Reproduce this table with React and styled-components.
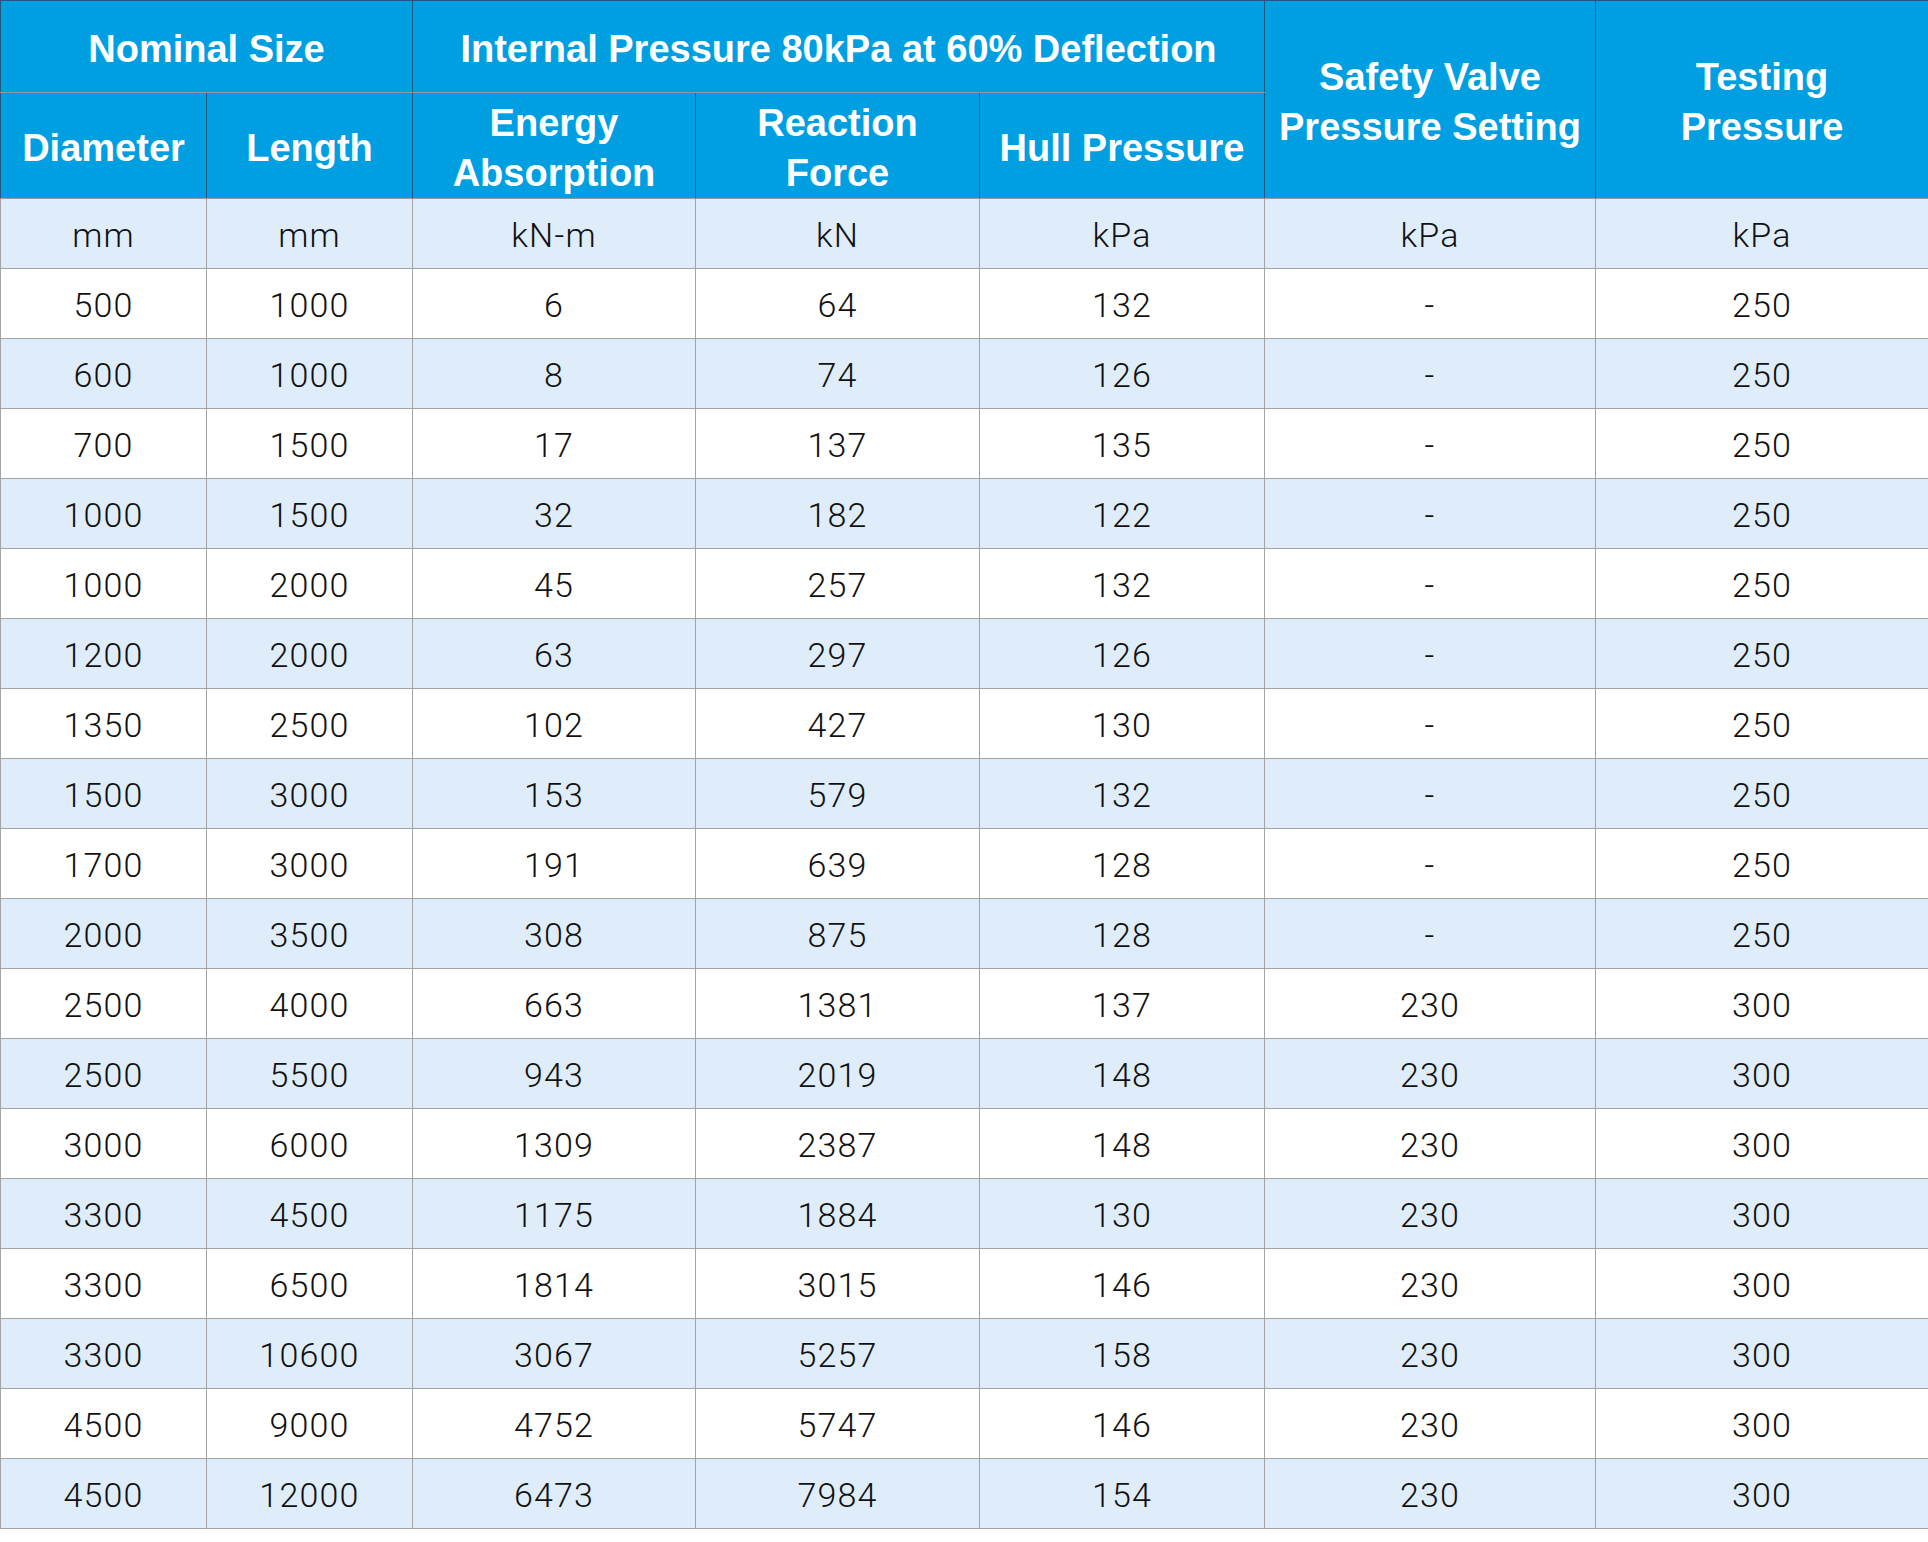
import React from 'react';
import styled, { createGlobalStyle } from 'styled-components';

const GlobalStyle = createGlobalStyle`
  html, body {
    margin: 0;
    padding: 0;
    background: #ffffff;
  }
`;

const columns = [206, 206, 283, 284, 285, 331, 333];

const units = ['mm', 'mm', 'kN-m', 'kN', 'kPa', 'kPa', 'kPa'];

const rows = [
  ['500', '1000', '6', '64', '132', '-', '250'],
  ['600', '1000', '8', '74', '126', '-', '250'],
  ['700', '1500', '17', '137', '135', '-', '250'],
  ['1000', '1500', '32', '182', '122', '-', '250'],
  ['1000', '2000', '45', '257', '132', '-', '250'],
  ['1200', '2000', '63', '297', '126', '-', '250'],
  ['1350', '2500', '102', '427', '130', '-', '250'],
  ['1500', '3000', '153', '579', '132', '-', '250'],
  ['1700', '3000', '191', '639', '128', '-', '250'],
  ['2000', '3500', '308', '875', '128', '-', '250'],
  ['2500', '4000', '663', '1381', '137', '230', '300'],
  ['2500', '5500', '943', '2019', '148', '230', '300'],
  ['3000', '6000', '1309', '2387', '148', '230', '300'],
  ['3300', '4500', '1175', '1884', '130', '230', '300'],
  ['3300', '6500', '1814', '3015', '146', '230', '300'],
  ['3300', '10600', '3067', '5257', '158', '230', '300'],
  ['4500', '9000', '4752', '5747', '146', '230', '300'],
  ['4500', '12000', '6473', '7984', '154', '230', '300'],
];

const Table = styled.table`
  width: 1928px;
  table-layout: fixed;
  border-collapse: collapse;
  border-spacing: 0;
`;

const HeadRow = styled.tr`
  height: ${(p) => p.$height}px;
`;

const HeadCell = styled.th`
  padding: 4px 0 0;
  background: #009fe2;
  color: #ffffff;
  border: 1px solid #1d5a7e;
  border-bottom-color: #8a9aa6;
  font-family: "Liberation Sans", Arial, sans-serif;
  font-weight: 700;
  font-size: 38px;
  line-height: 50px;
  letter-spacing: 0;
  text-align: center;
  vertical-align: middle;
`;

const Row = styled.tr`
  height: 70px;
  background: ${(p) => (p.$alt ? '#dfedfa' : '#ffffff')};
`;

const Cell = styled.td`
  padding: 3px 0 0;
  border: 1px solid #a3a3a3;
  color: #111111;
  font-family: Roboto, "Open Sans", sans-serif;
  font-weight: 300;
  font-size: 34px;
  letter-spacing: 1.2px;
  text-align: center;
  vertical-align: middle;
`;

const App = () => {
  return (
    <>
      <GlobalStyle />
      <Table>
        <colgroup>
          {columns.map((w, i) => (
            <col key={i} style={{ width: w }} />
          ))}
        </colgroup>
        <thead>
          <HeadRow $height={92}>
            <HeadCell colSpan={2}>Nominal Size</HeadCell>
            <HeadCell colSpan={3}>Internal Pressure 80kPa at 60% Deflection</HeadCell>
            <HeadCell rowSpan={2}>
              Safety Valve
              <br />
              Pressure Setting
            </HeadCell>
            <HeadCell rowSpan={2}>
              Testing
              <br />
              Pressure
            </HeadCell>
          </HeadRow>
          <HeadRow $height={106}>
            <HeadCell>Diameter</HeadCell>
            <HeadCell>Length</HeadCell>
            <HeadCell>
              Energy
              <br />
              Absorption
            </HeadCell>
            <HeadCell>
              Reaction
              <br />
              Force
            </HeadCell>
            <HeadCell>Hull Pressure</HeadCell>
          </HeadRow>
        </thead>
        <tbody>
          <Row $alt>
            {units.map((u, i) => (
              <Cell key={i}>{u}</Cell>
            ))}
          </Row>
          {rows.map((r, i) => (
            <Row key={i} $alt={i % 2 === 1}>
              {r.map((v, j) => (
                <Cell key={j}>{v}</Cell>
              ))}
            </Row>
          ))}
        </tbody>
      </Table>
    </>
  );
};

export default App;
